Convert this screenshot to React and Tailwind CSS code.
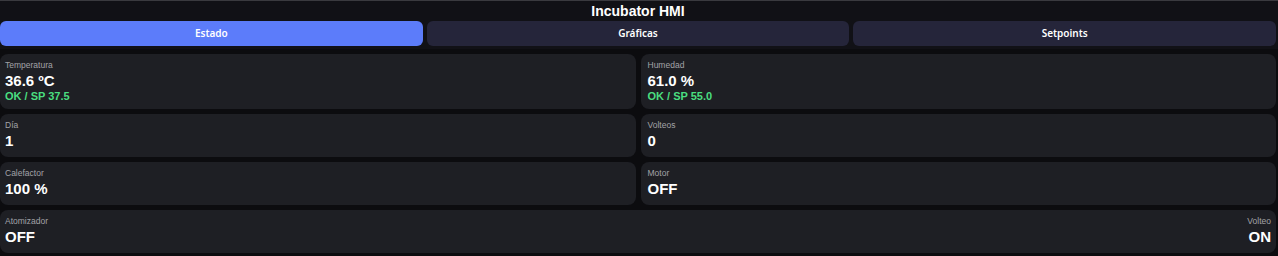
import React, { useState } from 'react';

const Card = ({ label, value, status, align = 'left' }) => (
  <div className={`flex flex-col ${align === 'right' ? 'items-end' : 'items-start'}`}>
    <span className="text-[8.5px] leading-[11px] text-[#a3a3a8]">{label}</span>
    <span className="text-[15px] leading-[19px] font-bold text-white">{value}</span>
    {status && <span className="text-[11px] leading-[13px] font-bold text-[#4ade80]">{status}</span>}
  </div>
);

const tabs = ['Estado', 'Gráficas', 'Setpoints'];

const App = () => {
  const [tab, setTab] = useState('Estado');

  return (
    <div className="w-[1278px] h-[256px] overflow-hidden bg-[#0c0c0f] font-['Liberation_Sans',Arial,sans-serif]">
      <div className="border-t border-[#3a3a3f] bg-[#111116] pr-[2px] pb-[3px]">
        <h1 className="text-center text-white font-bold text-[14px] leading-[20px]">Incubator HMI</h1>
        <div className="flex gap-1">
          {tabs.map((t) => (
            <button
              key={t}
              onClick={() => setTab(t)}
              className={`flex-1 h-[25px] rounded-md text-[10px] font-semibold text-white font-['Noto_Sans',sans-serif] ${
                tab === t ? 'bg-[#5c7cfa]' : 'bg-[#25253a]'
              }`}
            >
              {t}
            </button>
          ))}
        </div>
      </div>
      <div className="flex flex-col gap-[5px] pt-[5px] pr-[2px]">
        <div className="grid grid-cols-2 gap-[5px]">
          <div className="h-[55px] rounded-lg bg-[#1e1f24] px-[5px] pt-[6px]">
            <Card label="Temperatura" value="36.6 ºC" status="OK / SP 37.5" />
          </div>
          <div className="h-[55px] rounded-lg bg-[#1e1f24] px-[7px] pt-[6px]">
            <Card label="Humedad" value="61.0 %" status="OK / SP 55.0" />
          </div>
        </div>
        <div className="grid grid-cols-2 gap-[5px]">
          <div className="h-[43px] rounded-lg bg-[#1e1f24] px-[5px] pt-[6px]">
            <Card label="Día" value="1" />
          </div>
          <div className="h-[43px] rounded-lg bg-[#1e1f24] px-[7px] pt-[6px]">
            <Card label="Volteos" value="0" />
          </div>
        </div>
        <div className="grid grid-cols-2 gap-[5px]">
          <div className="h-[43px] rounded-lg bg-[#1e1f24] px-[5px] pt-[6px]">
            <Card label="Calefactor" value="100 %" />
          </div>
          <div className="h-[43px] rounded-lg bg-[#1e1f24] px-[7px] pt-[6px]">
            <Card label="Motor" value="OFF" />
          </div>
        </div>
        <div className="h-[43px] rounded-lg bg-[#1e1f24] px-[5px] pt-[6px] flex justify-between">
          <Card label="Atomizador" value="OFF" />
          <Card label="Volteo" value="ON" align="right" />
        </div>
      </div>
    </div>
  );
};

export default App;
